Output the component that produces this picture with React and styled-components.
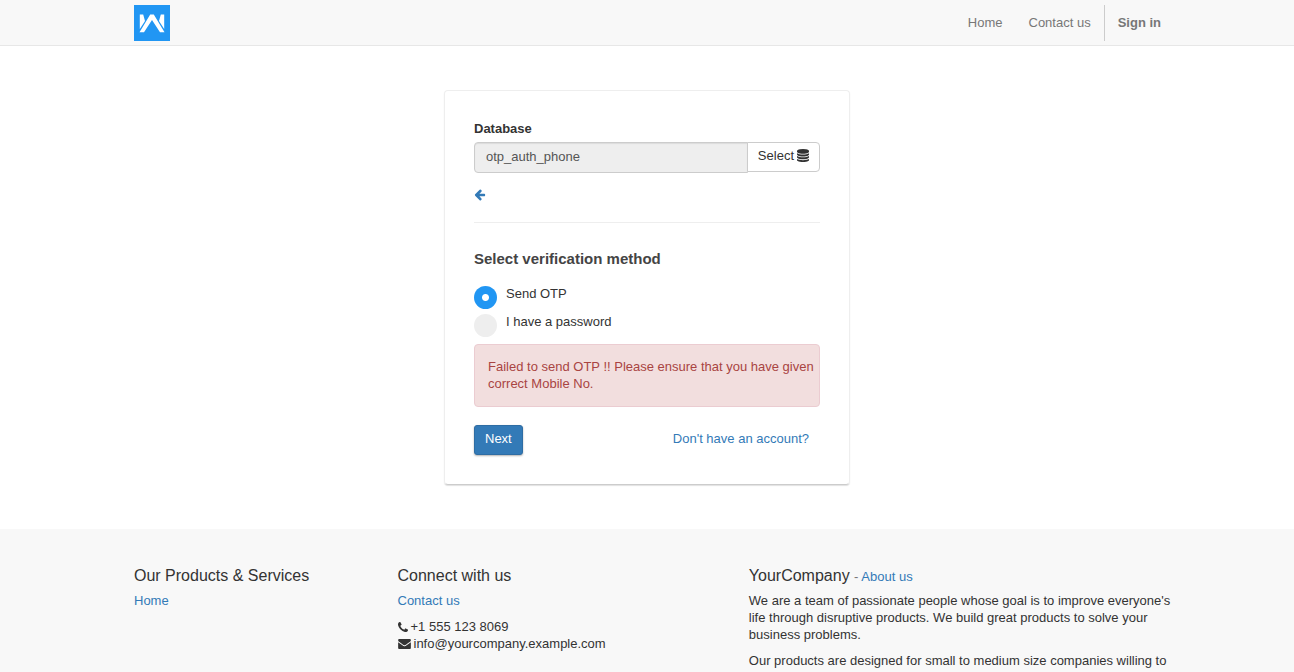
import React, { useState } from "react";
import styled, { createGlobalStyle } from "styled-components";

const GlobalStyle = createGlobalStyle`
  * { box-sizing: border-box; }
  body {
    margin: 0;
    background: #fff;
    color: #333;
    font: 13px/17px "Liberation Sans", Arial, sans-serif;
  }
  a { color: #337ab7; text-decoration: none; }
  p, h4 { margin: 0; }
  button, input { font: inherit; }
`;

const Page = styled.div`
  display: flex;
  flex-direction: column;
  min-height: 100vh;
`;

const Container = styled.div`
  width: 100%;
  max-width: 1054px;
  margin: 0 auto;
`;

const Header = styled.header`
  background: #f8f8f8;
  border-bottom: 1px solid #e7e7e7;
`;

const NavBar = styled(Container)`
  display: flex;
  justify-content: space-between;
  align-items: center;
  height: 45px;
  padding-left: 14px;
`;

const Brand = styled.a`
  display: flex;
`;

const Nav = styled.nav`
  display: flex;
  align-items: center;
`;

const NavLink = styled.a`
  padding: 0 13px;
  line-height: 36px;
  color: #777;
  font-weight: ${(p) => (p.$strong ? "bold" : "normal")};
  border-left: ${(p) => (p.$strong ? "1px solid #ccc" : "0")};
`;

const Main = styled.main`
  padding: 44px 16px;
`;

const Card = styled.form`
  width: 100%;
  max-width: 406px;
  margin: 0 auto;
  padding: 29px;
  border: 1px solid #eee;
  border-radius: 4px;
  border-bottom-color: #ccc;
  box-shadow: 0 1px 1px rgba(0, 0, 0, 0.12);
`;

const FieldLabel = styled.label`
  display: block;
  margin-bottom: 5px;
  font-weight: bold;
`;

const InputGroup = styled.div`
  display: flex;
  align-items: flex-start;
`;

const TextInput = styled.input`
  flex: 1;
  min-width: 0;
  height: 31px;
  padding: 0 11px 2px;
  color: #555;
  background: #eee;
  border: 1px solid #ccc;
  border-radius: 4px 0 0 4px;
  box-shadow: inset 0 1px 1px rgba(0, 0, 0, 0.08);
`;

const SelectButton = styled.button`
  display: flex;
  align-items: center;
  gap: 3px;
  height: 30px;
  margin-left: -1px;
  padding: 0 10px 3px;
  color: #333;
  background: #fff;
  border: 1px solid #ccc;
  border-radius: 0 4px 4px 0;
`;

const BackLink = styled.a`
  display: flex;
  width: 12px;
  margin-top: 16px;
`;

const Divider = styled.hr`
  margin: 21px 0 27px;
  border: 0;
  border-top: 1px solid #eee;
`;

const Options = styled.fieldset`
  margin: 0;
  padding: 0;
  border: 0;
`;

const Legend = styled.legend`
  padding: 0;
  margin-bottom: 18px;
  font-size: 15px;
  line-height: 18px;
  font-weight: bold;
  color: #444;
`;

const Option = styled.label`
  display: flex;
  gap: 9px;
  height: 23px;
  margin-bottom: 5px;
  line-height: 15px;
`;

const Radio = styled.input`
  appearance: none;
  flex: none;
  width: 23px;
  height: 23px;
  margin: 0;
  border-radius: 50%;
  background: #eee;
  &:checked {
    background: radial-gradient(circle, #fff 3px, #2196f3 4px);
  }
`;

const Alert = styled.div`
  margin-top: 2px;
  padding: 13px 4px 14px 13px;
  color: #a94442;
  background: #f2dede;
  border: 1px solid #ebccd1;
  border-radius: 4px;
`;

const Actions = styled.div`
  display: flex;
  justify-content: space-between;
  margin-top: 18px;
  padding-right: 11px;
`;

const PrimaryButton = styled.button`
  height: 30px;
  padding: 0 10px 3px;
  color: #fff;
  background: #337ab7;
  border: 1px solid #2e6da4;
  border-radius: 3px;
  box-shadow: 0 1px 2px rgba(0, 0, 0, 0.3);
`;

const SignupLink = styled.a`
  padding-top: 5px;
`;

const Footer = styled.footer`
  flex: 1;
  padding-top: 37px;
  background: #f8f8f8;
`;

const FooterGrid = styled(Container)`
  display: grid;
  grid-template-columns: 3fr 4fr 5fr;
`;

const Column = styled.section`
  padding: 0 2px 0 14px;
`;

const Heading = styled.h4`
  margin-bottom: 6px;
  font-size: 16px;
  line-height: 20px;
  font-weight: normal;
  small { font-size: 13px; line-height: 1; color: #777; }
`;

const Paragraph = styled.p`
  margin-bottom: 9px;
`;

const ContactLine = styled.div`
  display: flex;
  align-items: center;
  gap: 3px;
`;

const LogoIcon = () => (
  <svg width="36" height="36" viewBox="0 0 36 36" aria-label="Logo" role="img">
    <path fill="#2196f3" d="M0 0h36v36H0z" />
    <path fill="#fff" d="M5.800 9.500H9.200L11 16 5.800 24zM30.200 9.500H26.800L25 16 30.200 24zM5.500 27.200 16.200 9.500H19.800L30.500 27.200H26L18 15 10 27.200z" />
  </svg>
);

const ArrowLeftIcon = () => (
  <svg width="12" height="12" viewBox="-64 96 1728 1728" fill="currentColor" aria-hidden="true">
    <path d="M1536 896v128q0 53-32.500 90.500T1419 1152H715l293 294q38 36 38 90t-38 90l-75 76q-37 37-90 37-52 0-91-37L101 1050Q64 1013 64 960q0-52 37-91l651-650q38-38 91-38 52 0 90 38l75 74q38 38 38 91t-38 91L715 768h704q52 0 84.500 37.500T1536 896z" />
  </svg>
);

const DatabaseIcon = () => (
  <svg width="12" height="13" viewBox="0 0 1536 1792" preserveAspectRatio="none" fill="currentColor" aria-hidden="true">
    <path d="M768 768q237 0 443-43t325-127v170q0 69-103 128t-280 93.500-385 34.500-385-34.500T103 896 0 768V598q119 84 325 127t443 43zm0 768q237 0 443-43t325-127v170q0 69-103 128t-280 93.500-385 34.500-385-34.500-280-93.500T0 1536v-170q119 84 325 127t443 43zm0-384q237 0 443-43t325-127v170q0 69-103 128t-280 93.500-385 34.500-385-34.500-280-93.500T0 1152V982q119 84 325 127t443 43zM768 0q208 0 385 34.500t280 93.500 103 128v128q0 69-103 128t-280 93.500T768 640t-385-34.500T103 512 0 384V256q0-69 103-128t280-93.500T768 0z" />
  </svg>
);

const PhoneIcon = () => (
  <svg width="10" height="10" viewBox="0 0 1408 1408" fill="currentColor" aria-hidden="true">
    <path d="M1408 1112q0 27-10 70.500t-21 68.500q-21 50-122 106-94 51-186 51-27 0-53-3.500t-57.500-12.500-47-14.500T856 1357t-49-18q-98-35-175-83-127-79-264-216T152 776q-48-77-83-175-3-9-18-49t-20.500-55.500-14.500-47T3.500 392 0 339q0-92 51-186Q107 52 157 31q25-11 68.500-21T296 0q14 0 21 3 18 6 53 76 11 19 30 54t35 63.500 31 53.500q3 4 17.500 25t21.500 35.500 7 28.500q0 20-28.500 50t-62 55-62 53-28.500 46q0 9 5 22.500t8.500 20.500 14 24 11.500 19q76 137 174 235t235 174q2 1 19 11.500t24 14 20.500 8.500 22.500 5q18 0 46-28.500t53-62 55-62 50-28.500q14 0 28.500 7t35.500 21.500 25 17.500q25 15 53.500 31t63.500 35 54 30q70 35 76 53 3 7 3 21z" />
  </svg>
);

const EnvelopeIcon = () => (
  <svg width="13" height="10" viewBox="0 0 1792 1408" fill="currentColor" aria-hidden="true">
    <path d="M1792 454v794q0 66-47 113t-113 47H160q-66 0-113-47T0 1248V454q44 49 101 87 362 246 497 345 57 42 92.500 65.500t94.500 48 110 24.500h2q51 0 110-24.500t94.500-48T1194 886q170-123 498-345 57-39 100-87zm0-294q0 79-49 151t-122 123q-376 261-468 325-10 7-42.500 30.500t-54 38-52 32.500-57.500 27-50 9h-2q-23 0-50-9t-57.500-27-52-32.500-54-38T639 759q-91-64-262-182.500T172 434q-62-42-117-115.500T0 182q0-78 41.500-130T160 0h1472q65 0 112.500 47t47.500 113z" />
  </svg>
);

export default function App() {
  const [method, setMethod] = useState("otp");
  return (
    <Page>
      <GlobalStyle />
      <Header>
        <NavBar>
          <Brand href="#"><LogoIcon /></Brand>
          <Nav>
            <NavLink href="#">Home</NavLink>
            <NavLink href="#">Contact us</NavLink>
            <NavLink href="#" $strong>Sign in</NavLink>
          </Nav>
        </NavBar>
      </Header>
      <Main>
        <Card onSubmit={(e) => e.preventDefault()}>
          <FieldLabel htmlFor="db">Database</FieldLabel>
          <InputGroup>
            <TextInput id="db" readOnly value="otp_auth_phone" />
            <SelectButton type="button">Select <DatabaseIcon /></SelectButton>
          </InputGroup>
          <BackLink href="#" aria-label="Back"><ArrowLeftIcon /></BackLink>
          <Divider />
          <Options>
            <Legend>Select verification method</Legend>
            <Option>
              <Radio type="radio" name="method" checked={method === "otp"} onChange={() => setMethod("otp")} />
              Send OTP
            </Option>
            <Option>
              <Radio type="radio" name="method" checked={method === "password"} onChange={() => setMethod("password")} />
              I have a password
            </Option>
          </Options>
          <Alert role="alert">
            Failed to send OTP !! Please ensure that you have given correct Mobile No.
          </Alert>
          <Actions>
            <PrimaryButton type="submit">Next</PrimaryButton>
            <SignupLink href="#">Don't have an account?</SignupLink>
          </Actions>
        </Card>
      </Main>
      <Footer>
        <FooterGrid>
          <Column>
            <Heading>Our Products &amp; Services</Heading>
            <a href="#">Home</a>
          </Column>
          <Column>
            <Heading>Connect with us</Heading>
            <Paragraph><a href="#">Contact us</a></Paragraph>
            <ContactLine><PhoneIcon /> +1 555 123 8069</ContactLine>
            <ContactLine><EnvelopeIcon /> info@yourcompany.example.com</ContactLine>
          </Column>
          <Column>
            <Heading>YourCompany <small>- <a href="#">About us</a></small></Heading>
            <Paragraph>
              We are a team of passionate people whose goal is to improve everyone's life
              through disruptive products. We build great products to solve your business problems.
            </Paragraph>
            <p>Our products are designed for small to medium size companies willing to</p>
          </Column>
        </FooterGrid>
      </Footer>
    </Page>
  );
}
